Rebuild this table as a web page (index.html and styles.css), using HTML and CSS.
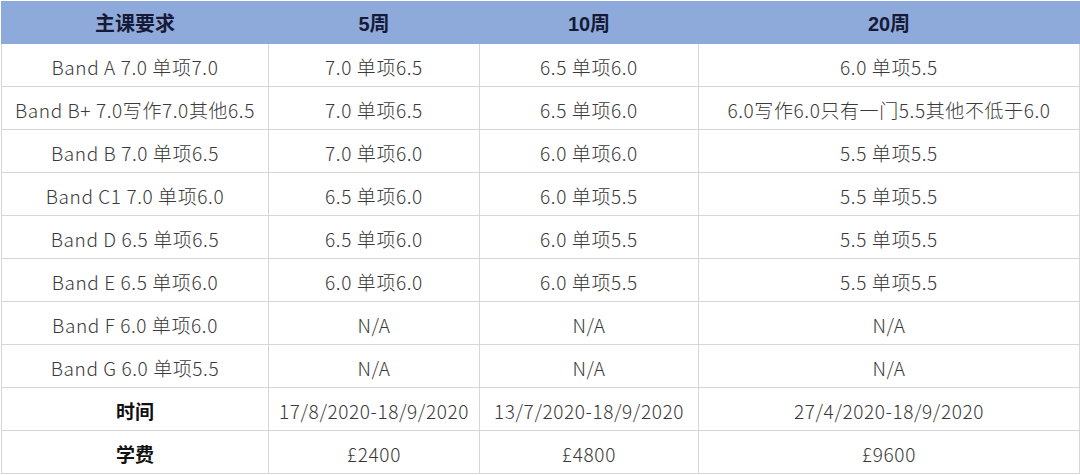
FILE: index.html
```html
<!DOCTYPE html>
<html lang="zh">
<head>
<meta charset="utf-8">
<link rel="stylesheet" href="styles.css">
</head>
<body>
<table class="fees">
  <colgroup>
    <col class="c1"><col class="c2"><col class="c3"><col class="c4">
  </colgroup>
  <thead>
    <tr><th>主课要求</th><th>5周</th><th>10周</th><th>20周</th></tr>
  </thead>
  <tbody>
    <tr><td>Band A 7.0 单项7.0</td><td>7.0 单项6.5</td><td>6.5 单项6.0</td><td>6.0 单项5.5</td></tr>
    <tr><td>Band B+ 7.0写作7.0其他6.5</td><td>7.0 单项6.5</td><td>6.5 单项6.0</td><td>6.0写作6.0只有一门5.5其他不低于6.0</td></tr>
    <tr><td>Band B 7.0 单项6.5</td><td>7.0 单项6.0</td><td>6.0 单项6.0</td><td>5.5 单项5.5</td></tr>
    <tr><td>Band C1 7.0 单项6.0</td><td>6.5 单项6.0</td><td>6.0 单项5.5</td><td>5.5 单项5.5</td></tr>
    <tr><td>Band D 6.5 单项6.5</td><td>6.5 单项6.0</td><td>6.0 单项5.5</td><td>5.5 单项5.5</td></tr>
    <tr><td>Band E 6.5 单项6.0</td><td>6.0 单项6.0</td><td>6.0 单项5.5</td><td>5.5 单项5.5</td></tr>
    <tr><td>Band F 6.0 单项6.0</td><td>N/A</td><td>N/A</td><td>N/A</td></tr>
    <tr><td>Band G 6.0 单项5.5</td><td>N/A</td><td>N/A</td><td>N/A</td></tr>
    <tr><td class="label">时间</td><td>17/8/2020-18/9/2020</td><td>13/7/2020-18/9/2020</td><td>27/4/2020-18/9/2020</td></tr>
    <tr><td class="label">学费</td><td>£2400</td><td>£4800</td><td>£9600</td></tr>
  </tbody>
</table>
</body>
</html>
```

FILE: styles.css
```css
html, body {
  margin: 0;
  padding: 0;
  background: #ffffff;
}
body {
  padding: 1px 0 0 1px;
  font-family: "Noto Sans CJK SC", "Noto Sans", sans-serif;
}
.fees {
  border-collapse: collapse;
  table-layout: fixed;
  width: 1078px;
}
.c1 { width: 267px; }
.c2 { width: 211px; }
.c3 { width: 219px; }
.c4 { width: 381px; }
.fees th,
.fees td {
  border: 1px solid #d6d6d6;
  height: 39px;
  padding: 3px 0 0;
  text-align: center;
  vertical-align: middle;
  font-size: 19px;
  letter-spacing: 0.6px;
  white-space: nowrap;
  line-height: 24px;
}
.fees th {
  background: #8eaadb;
  border-color: #8eaadb;
  color: #161a36;
  font-family: "Liberation Sans", "Noto Sans CJK SC", sans-serif;
  font-size: 20px;
  font-weight: 700;
  letter-spacing: 0;
  height: 38px;
}
.fees td {
  color: #3a3a3a;
  font-weight: 300;
}
.fees td.label {
  color: #111111;
  font-weight: 700;
  letter-spacing: 0;
}
```
